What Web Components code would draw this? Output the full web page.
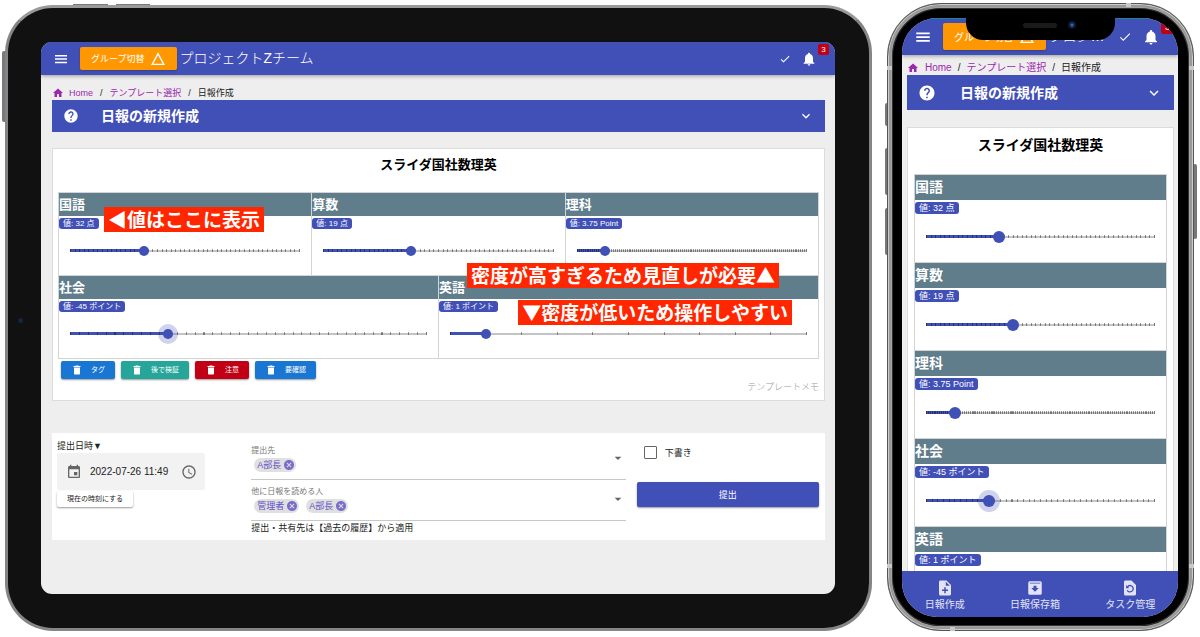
<!DOCTYPE html>
<html lang="ja">
<head>
<meta charset="utf-8">
<meta name="viewport" content="width=device-width, initial-scale=1">
<title>日報の新規作成</title>
<style>
  body { margin: 0; background: #fff; font-family: "Liberation Sans", "Noto Sans CJK JP", sans-serif; color: #222; }
</style>
</head>
<body>
<device-stage>
  <tablet-frame>
    <app-header></app-header>
    <page-body>
      <crumb-trail></crumb-trail>
      <page-banner>日報の新規作成</page-banner>
      <survey-card>
        <span slot="title">スライダ国社数理英</span>
        <score-field name="国語" unit="点" min="0" max="100" step="2" value="32"></score-field>
        <score-field name="算数" unit="点" min="0" max="50" step="1" value="19"></score-field>
        <score-field name="理科" unit="Point" min="0" max="30" step="0.25" value="3.75"></score-field>
        <score-field name="社会" unit="ポイント" min="-100" max="100" step="5" value="-45" wide active></score-field>
        <score-field name="英語" unit="ポイント" min="0" max="10" step="1" value="1" wide></score-field>
        <tag-button slot="tags">タグ</tag-button>
        <tag-button slot="tags" tone="teal">後で検証</tag-button>
        <tag-button slot="tags" tone="red">注意</tag-button>
        <tag-button slot="tags">要確認</tag-button>
        <span slot="memo">テンプレートメモ</span>
        <note-label slot="notes" spot="value">◀値はここに表示</note-label>
        <note-label slot="notes" spot="dense">密度が高すぎるため見直しが必要▲</note-label>
        <note-label slot="notes" spot="sparse">▼密度が低いため操作しやすい</note-label>
      </survey-card>
      <submit-panel></submit-panel>
    </page-body>
  </tablet-frame>
  <phone-frame>
    <app-header></app-header>
    <page-body>
      <crumb-trail></crumb-trail>
      <page-banner>日報の新規作成</page-banner>
      <survey-card stacked>
        <span slot="title">スライダ国社数理英</span>
        <score-field name="国語" unit="点" min="0" max="100" step="2" value="32"></score-field>
        <score-field name="算数" unit="点" min="0" max="50" step="1" value="19"></score-field>
        <score-field name="理科" unit="Point" min="0" max="30" step="0.25" value="3.75"></score-field>
        <score-field name="社会" unit="ポイント" min="-100" max="100" step="5" value="-45" active></score-field>
        <score-field name="英語" unit="ポイント" min="0" max="10" step="1" value="1"></score-field>
      </survey-card>
    </page-body>
    <tab-bar></tab-bar>
  </phone-frame>
</device-stage>

<script>
const BASE = `
  * { box-sizing: border-box; }
  button, input, select { font: inherit; color: inherit; margin: 0; padding: 0; border: 0; background: none; }
  a { color: inherit; text-decoration: none; }
`;

// Registers an element whose shadow root is cloned from a template.
function define(tag, css, html, setup) {
  const template = document.createElement('template');
  template.innerHTML = `<style>${BASE}${css}</style>${html}`;
  customElements.define(tag, class extends HTMLElement {
    connectedCallback() {
      if (this.shadowRoot) return;
      const root = this.attachShadow({ mode: 'open' });
      root.append(template.content.cloneNode(true));
      if (setup) setup(this, root);
    }
  });
}

const ICONS = {
  menu: '<path d="M3 6h18v2.2H3zM3 11h18v2.2H3zM3 16h18v2.2H3z"/>',
  triangle: '<path d="M12 6.5 19 19H5zM12 2 1.5 21h21z" fill-rule="evenodd"/>',
  check: '<path d="M9 16.2 4.8 12l-1.4 1.4L9 19 21 7l-1.4-1.4z"/>',
  bell: '<path d="M12 22c1.1 0 2-.9 2-2h-4c0 1.1.9 2 2 2zm6-6v-5c0-3.07-1.64-5.64-4.5-6.32V4c0-.83-.67-1.5-1.5-1.5s-1.5.67-1.5 1.5v.68C7.63 5.36 6 7.92 6 11v5l-2 2v1h16v-1z"/>',
  home: '<path d="M10 20v-6h4v6h5v-8h3L12 3 2 12h3v8z"/>',
  help: '<path d="M12 2C6.48 2 2 6.48 2 12s4.48 10 10 10 10-4.48 10-10S17.52 2 12 2zm1 17h-2v-2h2zm2.07-7.75-.9.92C13.45 12.9 13 13.5 13 15h-2v-.5c0-1.1.45-2.1 1.17-2.83l1.24-1.26c.37-.36.59-.86.59-1.41 0-1.1-.9-2-2-2s-2 .9-2 2H8c0-2.21 1.79-4 4-4s4 1.79 4 4c0 .88-.36 1.68-.93 2.25z"/>',
  chevron: '<path d="M7.41 8.59 12 13.17l4.59-4.58L18 10l-6 6-6-6z"/>',
  caret: '<path d="m7 10 5 5 5-5z"/>',
  trash: '<path d="M6 19c0 1.1.9 2 2 2h8c1.1 0 2-.9 2-2V7H6zM19 4h-3.500l-1-1h-5l-1 1H5v2h14z"/>',
  event: '<path d="M17 12h-5v5h5zM16 1v2H8V1H6v2H5c-1.110 0-2 .9-2 2v14c0 1.100.9 2 2 2h14c1.100 0 2-.9 2-2V5c0-1.100-.9-2-2-2h-1V1zm3 18H5V8h14z"/>',
  clock: '<path d="M11.990 2C6.470 2 2 6.480 2 12s4.470 10 9.990 10C17.520 22 22 17.520 22 12S17.520 2 11.990 2zM12 20c-4.420 0-8-3.580-8-8s3.580-8 8-8 8 3.580 8 8-3.580 8-8 8zm.5-13H11v6l5.250 3.150.750-1.230-4.500-2.670z"/>',
  cancel: '<path d="M12 2C6.470 2 2 6.470 2 12s4.470 10 10 10 10-4.470 10-10S17.530 2 12 2zm5 13.590L15.590 17 12 13.410 8.410 17 7 15.590 10.590 12 7 8.410 8.410 7 12 10.590 15.590 7 17 8.410 13.410 12z"/>',
  noteAdd: '<path d="M14 2H6c-1.100 0-2 .9-2 2v16c0 1.100.89 2 2 2h12c1.100 0 2-.9 2-2V8zm2 14h-3v3h-2v-3H8v-2h3v-3h2v3h3zm-3-7V3.500L18.500 9z"/>',
  archive: '<path d="M5 3h14a2 2 0 0 1 2 2v14a2 2 0 0 1-2 2H5a2 2 0 0 1-2-2V5a2 2 0 0 1 2-2zM5 5v1h14V5zM10 9v3H7l5 5 5-5h-3V9z" fill-rule="evenodd"/>',
  restore: '<path d="M14 2H6c-1.100 0-2 .9-2 2v16c0 1.100.9 2 2 2h12c1.100 0 2-.9 2-2V8zm-2 16c-2 0-3.800-1.100-4.600-2.800l1.500-.7c.6 1.100 1.700 1.900 3.100 1.900a3.400 3.400 0 1 0-2.500-5.700L11 12.200H6.800V8l1.500 1.500A5.100 5.100 0 1 1 12 18z"/>'
};

define('app-icon', `
  :host { display: block; flex: none; width: var(--size, 16px); height: var(--size, 16px); }
  svg { display: block; width: 100%; height: 100%; fill: currentColor; }
`, '<svg viewBox="0 0 24 24" aria-hidden="true"></svg>', (el, root) => {
  root.querySelector('svg').innerHTML = ICONS[el.getAttribute('name')];
});

define('device-stage', `
  :host { display: grid; grid-template-columns: minmax(0, 867fr) minmax(0, 307fr); gap: 15px;
    height: 100vh; padding: 3px 6px 6px 5px; box-sizing: border-box; }
`, '<slot></slot>');

define('tablet-frame', `
  :host { display: flex; position: relative; box-sizing: border-box; min-height: 0; margin-top: 2px; padding: 34px 34px 34px 33px;
    background: #111; border: 3px solid #858585; border-top-color: #9a9a9a; border-radius: 48px;
    --head: 33px; --icon: 16px; --icon-check: 12px; --small: 9px; --crumb-top: 11px; --crumb-gap: 5px; --slash-gap: 7px;
    --banner: 32px; --banner-gap: 22px; --card-gap: 16px; --name: 13px; --value: 8px; --badge: 11px;
    --card-pad: 6px; --card-side: 5px; --title-gap: 17px; --cell-head: 23px; --thumb: 10px; --bell-badge: 11px;
    --slide-gap: 7px; --slide-end: 9px; --body-right: 10px; --body-left: 11px; }
  .screen { flex: 1; min-width: 0; display: flex; flex-direction: column; overflow: hidden; border-radius: 11px; background: #eee; }
  i { position: absolute; background: #77797d; z-index: -1; }
  .up { left: 65px; top: -4px; width: 35px; height: 3px; }
  .down { left: 108px; top: -4px; width: 34px; height: 3px; }
  .power { left: -6px; top: 43px; width: 4px; height: 71px; border-radius: 2px 0 0 2px; }
  .camera { left: 10px; top: 50%; width: 5px; height: 5px; border-radius: 50%; background: #14263f; z-index: 1; }
`, '<i class="up"></i><i class="down"></i><i class="power"></i><i class="camera"></i><div class="screen"><slot></slot></div>');

define('phone-frame', `
  :host { display: flex; position: relative; box-sizing: border-box; min-height: 0; padding: 10px 11px 9px 10px;
    background: #000; border: 5px solid #a3a39f; border-radius: 54px; box-shadow: inset 0 0 0 1px #333, inset 0 0 0 2px #000;
    --head: 37px; --icon: 18px; --icon-check: 14px; --small: 10px; --crumb-top: 6px; --crumb-gap: 6px; --slash-gap: 6px;
    --banner: 35px; --banner-gap: 24px; --card-gap: 17px; --name: 14px; --value: 9px; --badge: 12px;
    --card-pad: 7px; --card-side: 6px; --title-gap: 19px; --cell-head: 25px; --thumb: 12px; --bell-badge: 13px;
    --slide-gap: 8px; --slide-end: 10px; --body-right: 4px; --body-left: 5px; --head-line: #17869a; }
  :host::before { content: ""; position: absolute; inset: -5px; border: 1px solid #555; border-radius: 54px;
    box-shadow: inset 0 0 0 1px #ccc, inset 0 0 0 3px #999; pointer-events: none; }
  .screen { flex: 1; min-width: 0; display: flex; flex-direction: column; overflow: hidden; border-radius: 35px; background: #eee; isolation: isolate; }
  .notch { position: absolute; z-index: 2; top: 8px; left: 50%; width: 149px; height: 24px; margin-left: -75px; background: #000;
    border-radius: 0 0 17px 17px; }
  .notch::before { content: ""; position: absolute; left: 57px; top: 7px; width: 34px; height: 5px; border-radius: 3px; background: #1a1a1a; }
  .notch::after { content: ""; position: absolute; left: 102px; top: 5px; width: 8px; height: 8px; border-radius: 50%;
    background: radial-gradient(circle, #2c62b5 0 1px, #11254a 2px, #0b1020 4px); }
  i { position: absolute; z-index: -1; width: 4px; background: #777; border-radius: 2px; }
  .mute { left: -7px; top: 95px; height: 23px; }
  .up { left: -7px; top: 140px; height: 47px; }
  .down { left: -7px; top: 200px; height: 47px; }
  .power { right: -8px; top: 156px; height: 75px; }
  b { position: absolute; width: 5px; height: 4px; background: #c8c8c4; }
  .l { left: -5px; } .r { right: -5px; } .hi { top: 58px; } .lo { bottom: 58px; }
  .t { top: -5px; right: 58px; } .b { bottom: -5px; left: 58px; }
`, `<i class="mute"></i><i class="up"></i><i class="down"></i><i class="power"></i>
  <b class="l hi"></b><b class="r hi"></b><b class="l lo"></b><b class="r lo"></b><b class="t"></b><b class="b"></b>
  <div class="screen"><slot></slot></div><div class="notch"></div>`);

define('app-header', `
  :host { display: block; flex: none; position: relative; z-index: 1; }
  header { display: flex; align-items: center; height: var(--head); padding: 0 18px 0 12px; color: #fff; background: #4150b6;
    box-shadow: 0 1px 4px rgba(0,0,0,.35), inset 0 1px var(--head-line, #4150b6); }
  .menu { margin-right: 11px; --size: var(--icon); }
  .group { flex: none; display: flex; align-items: center; gap: 6px; height: calc(var(--head) - 10px); padding: 0 11px; margin-right: 2px;
    background: #ff9800; border-radius: 2px; font-size: var(--small); white-space: nowrap; --size: 16px; box-shadow: 0 1px 2px rgba(0,0,0,.2); }
  h1 { flex: 1; min-width: 0; margin: 0; padding-bottom: 2px; font-size: 14px; line-height: 20px; font-weight: 300; white-space: nowrap; overflow: hidden; text-overflow: ellipsis; }
  .done { --size: var(--icon-check); margin: 0 10px; }
  .bell { position: relative; --size: var(--icon); }
  .count { position: absolute; left: calc(100% + 1px); top: -7px; width: var(--bell-badge); height: var(--bell-badge); border-radius: 2px;
    background: #c10015; font-size: var(--value); line-height: var(--bell-badge); text-align: center; }
`, `<header>
  <button class="menu" aria-label="メニュー"><app-icon name="menu"></app-icon></button>
  <button class="group">グループ切替<app-icon name="triangle"></app-icon></button>
  <h1>プロジェクトZチーム</h1>
  <button class="done" aria-label="確認"><app-icon name="check"></app-icon></button>
  <button class="bell" aria-label="通知"><app-icon name="bell"></app-icon><span class="count">3</span></button>
</header>`);

define('page-body', `
  :host { display: block; flex: 1; min-height: 0; overflow: hidden; padding: 0 var(--body-right) 0 var(--body-left); }
`, '<slot></slot>');

define('crumb-trail', `
  :host { display: block; padding-top: var(--crumb-top); }
  nav { display: flex; align-items: center; gap: var(--slash-gap); height: 14px; font-size: var(--small); line-height: 14px; white-space: nowrap; }
  a { color: #9c27b0; }
  .home { display: flex; align-items: center; gap: var(--crumb-gap); --size: 12px; }
`, `<nav aria-label="パンくず">
  <a class="home" href="#home"><app-icon name="home"></app-icon>Home</a><span>/</span>
  <a href="#templates">テンプレート選択</a><span>/</span><span>日報作成</span>
</nav>`);

define('page-banner', `
  :host { display: block; }
  button { display: flex; align-items: center; width: 100%; height: var(--banner); padding: 0 11px; background: #4150b6; color: #fff;
    font-size: 14px; line-height: 20px; font-weight: 600; text-align: left; --size: var(--icon); }
  span { flex: 1; margin-left: var(--banner-gap); white-space: nowrap; }
`, '<button><app-icon name="help"></app-icon><span><slot></slot></span><app-icon name="chevron"></app-icon></button>');

define('survey-card', `
  :host { display: block; position: relative; margin-top: var(--card-gap); padding: var(--card-pad) var(--card-side);
    background: #fff; border: 1px solid #dcdcdc; box-sizing: border-box; }
  h2 { margin: 0 0 var(--title-gap); font-size: var(--name); line-height: 20px; font-weight: 600; text-align: center; color: #000; }
  .fields { display: grid; grid-template-columns: repeat(6, minmax(0, 1fr)); border: solid #d4d4d4; border-width: 1px 0 0 1px; }
  ::slotted(score-field) { grid-column: span 2; }
  ::slotted(score-field[wide]) { grid-column: span 3; }
  :host([stacked]) .fields { grid-template-columns: minmax(0, 1fr); }
  :host([stacked]) ::slotted(score-field) { grid-column: auto; }
  .tags { display: flex; gap: 6px; padding: 2px 3px 1px; }
  .memo { font-size: var(--small); line-height: 14px; font-weight: 300; text-align: right; color: #999; }
`, `<h2><slot name="title"></slot></h2><div class="fields"><slot></slot></div>
  <div class="tags"><slot name="tags"></slot></div><div class="memo"><slot name="memo"></slot></div><slot name="notes"></slot>`);

define('score-field', `
  :host { display: block; min-width: 0; border: solid #d4d4d4; border-width: 0 1px 1px 0; }
  label { display: block; height: var(--cell-head); line-height: var(--cell-head); background: #607d8b; color: #fff; font-size: var(--name); font-weight: 600; }
  .body { padding: 2px 0 var(--slide-end); }
  output { display: block; width: max-content; height: var(--badge); line-height: var(--badge); padding: 0 4px; border-radius: 3px;
    background: #4150b6; color: #fff; font-size: var(--value); }
  .slider { display: grid; align-items: center; height: 30px; margin-top: var(--slide-gap); padding: 0 calc(11px - var(--thumb) / 2); }
  .slider > * { grid-area: 1 / 1; }
  .rail { position: relative; height: 2px; margin: 0 calc(var(--thumb) / 2); background: #c4c4c4; }
  .fill { position: absolute; left: 0; top: -1px; height: 3px; width: var(--part); background: #3f51b5; }
  .ticks { position: absolute; inset: -1px 0 0; background: repeating-linear-gradient(90deg, rgba(0,0,0,.4) 0 1px, transparent 1px calc(100% / var(--steps))); border-right: 1px solid #777; }
  input { display: block; width: 100%; min-width: 0; height: 30px; appearance: none; position: relative; }
  input::-webkit-slider-thumb { appearance: none; width: var(--thumb); height: var(--thumb); border-radius: 50%; background: #3f51b5; }
  :host([active]) input::-webkit-slider-thumb { box-shadow: 0 0 0 5px rgba(63,81,181,.25); }
`, `<label for="score"></label><div class="body"><output for="score"></output>
  <div class="slider"><div class="rail"><div class="fill"></div><div class="ticks"></div></div><input id="score" type="range"></div></div>`,
(el, root) => {
  const get = name => el.getAttribute(name);
  const input = root.querySelector('input');
  root.querySelector('label').textContent = get('name');
  for (const name of ['min', 'max', 'step', 'value']) input.setAttribute(name, get(name));
  input.value = get('value');
  const range = input.max - input.min;
  const rail = root.querySelector('.rail');
  rail.style.setProperty('--steps', range / input.step);
  const show = () => {
    root.querySelector('output').textContent = `値: ${input.value} ${get('unit')}`;
    rail.style.setProperty('--part', (input.value - input.min) / range * 100 + '%');
  };
  input.addEventListener('input', show);
  show();
});

define('tag-button', `
  :host { display: block; --tone: #1976d2; }
  :host([tone="teal"]) { --tone: #26a69a; }
  :host([tone="red"]) { --tone: #c10015; }
  button { display: flex; align-items: center; gap: 8px; height: 18px; padding: 0 10px; border-radius: 2px; background: var(--tone); color: #fff;
    font-size: 7px; line-height: 18px; white-space: nowrap; box-shadow: 0 1px 2px rgba(0,0,0,.4); --size: 12px; }
`, '<button><app-icon name="trash"></app-icon><slot></slot></button>');

// Call-outs laid over the card.
define('note-label', `
  :host { display: block; position: absolute; padding: 0 4px 2px; background: #ff2600; color: #fff; font-size: 19px; line-height: 23px; font-weight: 600; white-space: nowrap;
    font-family: "Noto Sans CJK JP", sans-serif; }
  :host([spot="value"]) { left: 51px; top: 58px; }
  :host([spot="dense"]) { right: 45px; top: 114px; }
  :host([spot="sparse"]) { right: 32px; top: 151px; }
`, '<slot></slot>');

define('name-chip', `
  :host { display: block; }
  span { display: flex; align-items: center; gap: 2px; height: 14px; padding: 0 1px 0 3px; border-radius: 7px; background: #e0e0e0; color: #5f50c8;
    font-size: 9px; line-height: 14px; white-space: nowrap; --size: 12px; }
  button { opacity: .8; }
`, '<span><slot></slot><button aria-label="外す"><app-icon name="cancel"></app-icon></button></span>');

define('people-select', `
  :host { display: block; border-bottom: 1px solid #c8c8c8; }
  .box { display: grid; grid-template-columns: 1fr 16px; height: 34px; }
  label { display: block; font-size: 8px; line-height: 11px; color: #777; }
  .chips { display: flex; gap: 7px; margin: 2px 0 0 3px; }
  .drop { display: grid; align-self: start; margin-top: 5px; color: #666; }
  .drop > * { grid-area: 1 / 1; }
  select { width: 16px; height: 16px; appearance: none; opacity: 0; }
`, `<div class="box"><div><label for="people"></label><div class="chips"><slot></slot></div></div>
  <div class="drop"><app-icon name="caret"></app-icon><select id="people"><option></option></select></div></div>`,
(el, root) => { root.querySelector('label').textContent = el.getAttribute('label'); });

define('submit-panel', `
  :host { display: block; margin-top: 32px; background: #fff; }
  form { display: grid; grid-template-columns: minmax(0, 1fr) minmax(0, 2fr) minmax(0, 1fr); font-size: 9px; line-height: 14px; padding-bottom: 5px; }
  .when { padding: 6px 6px 0 5px; }
  .when > label { display: block; }
  .date { display: flex; align-items: center; width: 148px; height: 37px; padding: 0 8px 0 9px; background: #f2f2f2; color: #666; border-radius: 2px; }
  .date input { flex: 1; min-width: 0; margin-left: 8px; font-size: 10px; color: #222; }
  .now { height: 16px; margin-top: 1px; padding: 0 10px; font-size: 7px; line-height: 16px; background: #fff; border-radius: 2px; box-shadow: 0 1px 2px rgba(0,0,0,.4); display: block; }
  .who { display: grid; gap: 6px; padding: 12px 6px 0; }
  .who p { margin: -6px 0 0; }
  .send { padding: 13px 6px 0 5px; }
  .draft { display: flex; align-items: center; gap: 8px; margin-left: 7px; height: 13px; }
  .draft input { appearance: none; width: 13px; height: 13px; border: 1px solid #666; border-radius: 1px; }
  .submit { display: block; width: 100%; height: 25px; margin-top: 23px; border-radius: 2px; background: #4150b6; color: #fff; box-shadow: 0 1px 2px rgba(0,0,0,.4); }
`, `<form>
  <div class="when"><label for="date">提出日時▼</label>
    <div class="date"><app-icon name="event"></app-icon><input id="date" type="text" value="2022-07-26 11:49"><button type="button" aria-label="時刻を選択"><app-icon name="clock"></app-icon></button></div>
    <button class="now" type="button">現在の時刻にする</button></div>
  <div class="who">
    <people-select label="提出先"><name-chip>A部長</name-chip></people-select>
    <people-select label="他に日報を読める人"><name-chip>管理者</name-chip><name-chip>A部長</name-chip></people-select>
    <p>提出・共有先は【過去の履歴】から適用</p></div>
  <div class="send"><div class="draft"><input id="draft" type="checkbox"><label for="draft">下書き</label></div>
    <button class="submit" type="button">提出</button></div>
</form>`);

define('tab-bar', `
  :host { display: block; flex: none; }
  nav { display: flex; justify-content: space-around; height: 46px; padding-top: 8px; background: #4150b6; color: #e2e4f6; font-size: 10px; line-height: 14px; --size: 18px; }
  a { display: flex; flex-direction: column; align-items: center; gap: 1px; white-space: nowrap; }
`, `<nav>
  <a href="#new"><app-icon name="noteAdd"></app-icon>日報作成</a>
  <a href="#box"><app-icon name="archive"></app-icon>日報保存箱</a>
  <a href="#tasks"><app-icon name="restore"></app-icon>タスク管理</a>
</nav>`);
</script>
</body>
</html>
